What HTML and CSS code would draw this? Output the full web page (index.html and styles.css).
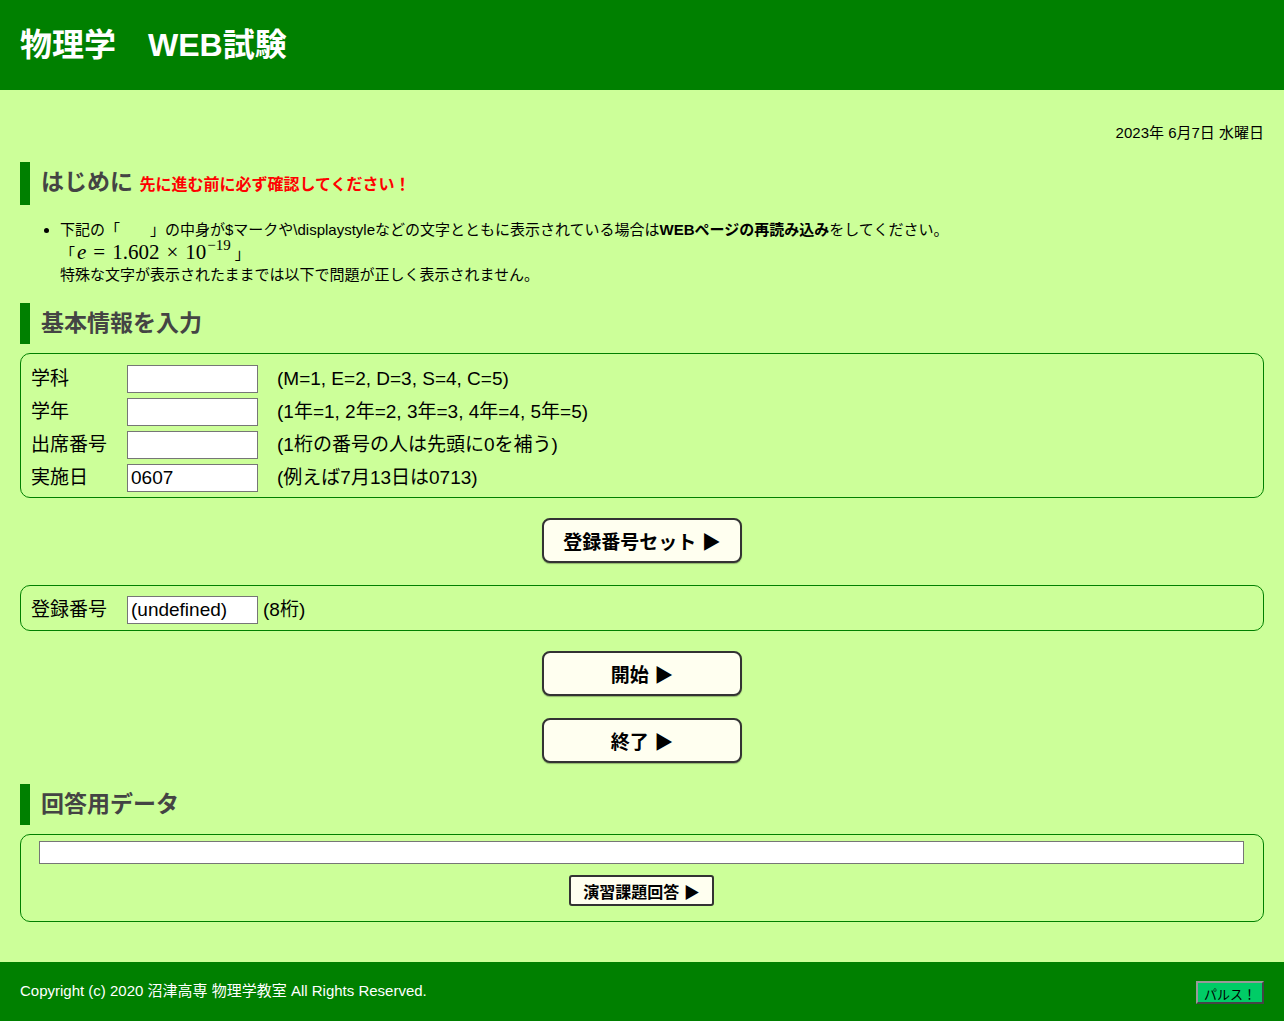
FILE: index.html
```html
<!DOCTYPE html>
<html lang="ja">
<head>
    <meta charset="UTF-8">
    <meta name="viewport" content="width=device-width, initial-scale=1.0">
    <title>物理学 WEB試験</title>
    <link rel="stylesheet" href="styles.css">
</head>
<body>
    <header>
        <h1>物理学　WEB試験</h1>
    </header>

    <div class="main">
        <div class="date">2023年 6月7日 水曜日</div>

        <h2>はじめに <span class="warn">先に進む前に必ず確認してください！</span></h2>
        <ul class="notes">
            <li>下記の「　　」の中身が$マークや\displaystyleなどの文字とともに表示されている場合は<b>WEBページの再読み込み</b>をしてください。<br>
                <span class="math-line">「<span class="math"><i>e</i><span class="op">=</span>1.602<span class="op">×</span>10<sup>−19</sup></span>」</span><br>
                特殊な文字が表示されたままでは以下で問題が正しく表示されません。
            </li>
        </ul>

        <h2>基本情報を入力</h2>
        <div class="box info">
            <div class="row"><span class="label">学科</span><input type="text"><span class="hint">(M=1, E=2, D=3, S=4, C=5)</span></div>
            <div class="row"><span class="label">学年</span><input type="text"><span class="hint">(1年=1, 2年=2, 3年=3, 4年=4, 5年=5)</span></div>
            <div class="row"><span class="label">出席番号</span><input type="text"><span class="hint">(1桁の番号の人は先頭に0を補う)</span></div>
            <div class="row"><span class="label">実施日</span><input type="text" value="0607"><span class="hint">(例えば7月13日は0713)</span></div>
        </div>

        <div class="actions"><button class="big">登録番号セット ▶</button></div>

        <div class="box reg">
            <div class="row"><span class="label">登録番号</span><input type="text" value="(undefined)"><span class="hint near">(8桁)</span></div>
        </div>

        <div class="actions"><button class="big">開始 ▶</button></div>
        <div class="actions last"><button class="big">終了 ▶</button></div>

        <h2>回答用データ</h2>
        <div class="box answer">
            <input type="text" class="wide">
            <div class="actions small"><button class="mid">演習課題回答 ▶</button></div>
        </div>
    </div>

    <footer>
        <span>Copyright (c) 2020 沼津高専 物理学教室 All Rights Reserved.</span>
        <button class="pulse">パルス！</button>
    </footer>
</body>
</html>
```

FILE: styles.css
```css
body {
    font-family: "Liberation Sans", Arial, "Noto Sans CJK JP", sans-serif;
    margin: 0;
    padding: 0;
    background-color: #ccff99;
    color: #000;
}
header {
    background-color: #008000;
    color: white;
    height: 90px;
    padding: 0 20px;
    display: flex;
    align-items: center;
}
header h1 {
    margin: 0;
    font-size: 32px;
    line-height: 40px;
}
.main {
    padding: 34px 20px 40px;
}
.date {
    text-align: right;
    font-size: 15px;
    line-height: 18px;
}
h2 {
    margin: 20px 0 0;
    border-left: 10px solid #008000;
    padding-left: 11px;
    font-size: 23px;
    line-height: 41px;
    color: #444;
}
h2 .warn {
    color: #ff0000;
    font-size: 16px;
}
.notes {
    margin: 14px 0 0;
    padding-left: 40px;
    font-size: 15px;
    line-height: 21px;
}
.notes + h2 {
    margin-top: 18px;
}
.math-line {
    display: inline-block;
    padding-top: 2px;
    margin-bottom: -3px;
}
.math {
    font-family: "Liberation Serif", "DejaVu Serif", serif;
    font-size: 21px;
    line-height: 20px;
    padding: 0 4px 0 2px;
}
.math .op {
    margin: 0 7px;
}
.math sup {
    font-size: 15px;
    vertical-align: 9px;
    line-height: 0;
    margin-left: 1px;
}
.box {
    border: 1px solid #008000;
    border-radius: 10px;
}
.info {
    margin-top: 9px;
    padding: 11px 11px 5px;
    display: flex;
    flex-direction: column;
    gap: 5px;
}
.row {
    display: flex;
    align-items: center;
    font-size: 19px;
    line-height: 22px;
}
.label {
    width: 95px;
    margin-left: -1px;
}
.row input {
    width: 131px;
    height: 28px;
    box-sizing: border-box;
    border: 1px solid #767676;
    padding: 0 3px;
    font-family: "Liberation Sans", Arial, sans-serif;
    font-size: 19px;
    background: white;
    margin-left: 1px;
}
.hint {
    margin-left: 19px;
}
.hint.near {
    margin-left: 5px;
}
.actions {
    display: flex;
    justify-content: center;
    margin: 20px 0 22px;
}
.actions + .actions {
    margin-top: 0;
}
.actions.last {
    margin-bottom: 21px;
}
.actions + h2 {
    margin-top: 0;
}
button {
    font-family: "Liberation Sans", Arial, "Noto Sans CJK JP", sans-serif;
    cursor: pointer;
}
.big {
    width: 200px;
    height: 45px;
    background: #fffff0;
    border: 2px solid #333;
    border-radius: 8px;
    font-size: 19px;
    font-weight: bold;
    color: #000;
    box-shadow: 0 1px 1px rgba(0, 0, 0, 0.3);
}
.reg {
    padding: 10px 11px 6px;
}
.answer {
    margin-top: 9px;
    padding: 6px 19px 15px 18px;
}
.wide {
    display: block;
    width: 100%;
    height: 23px;
    box-sizing: border-box;
    border: 1px solid #767676;
    background: white;
}
.actions.small {
    margin: 11px 0 0;
}
.mid {
    width: 145px;
    height: 31px;
    background: #fffff0;
    border: 2px solid #333;
    border-radius: 3px;
    font-size: 16px;
    font-weight: bold;
    color: #000;
}
footer {
    background-color: #008000;
    color: white;
    height: 59px;
    padding: 0 20px;
    display: flex;
    align-items: center;
    justify-content: space-between;
    font-size: 15px;
}
footer span {
    margin-top: -4px;
}
.pulse {
    background: #00cc66;
    border: 2px outset #999;
    font-size: 13px;
    color: #000;
    padding: 1px 6px;
    width: 68px;
    height: 23px;
    margin-top: 2px;
}
```
